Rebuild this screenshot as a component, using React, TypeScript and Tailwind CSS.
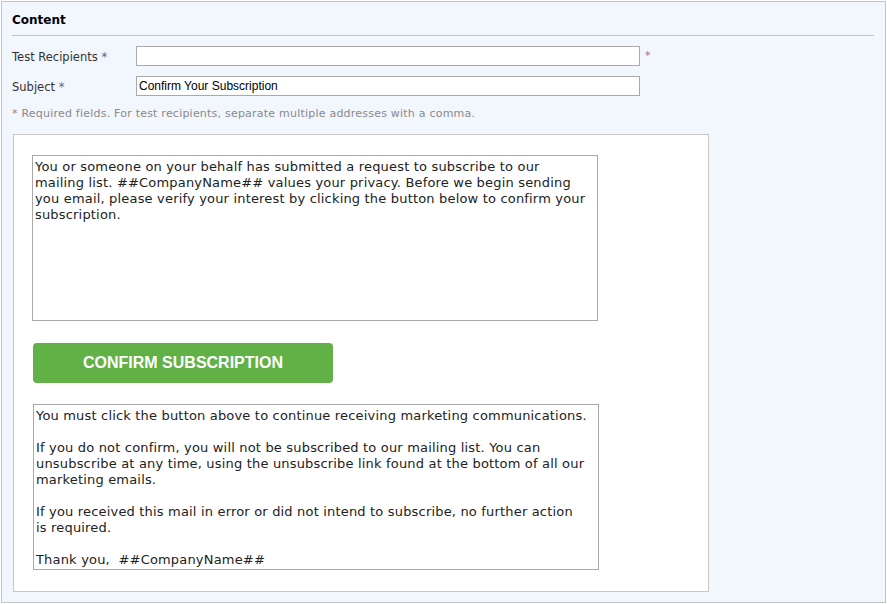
export default function App() {
  const body = "font-['DejaVu_Sans',Verdana,sans-serif]"
  return (
    <div className="pl-px pt-px bg-white">
      <div className={`w-[885px] h-[602px] border border-[#c4c4c4] bg-[#f2f6fd] text-[#222] ${body}`}>
        <div className="px-[10px] pt-[10px]">
          <div className="border-b border-[#c4c4c4] pb-[7px] mr-[1px] text-[12px] font-bold leading-[16px] text-black">Content</div>

          <div className="mt-[10px] flex items-center h-[20px]">
            <label className="w-[124px] pt-[3px] text-[11.5px] text-[#333]">
              Test Recipients <span className="text-[#666]">*</span>
            </label>
            <input className="w-[504px] h-[20px] border border-[#a9a9a9] bg-white" />
            <span className="ml-[5px] text-[11px] text-[#c0607a]">*</span>
          </div>

          <div className="mt-[10px] flex items-center h-[20px]">
            <label className="w-[124px] pt-[3px] text-[11.5px] text-[#333]">
              Subject <span className="text-[#666]">*</span>
            </label>
            <input
              defaultValue="Confirm Your Subscription"
              className="w-[504px] h-[20px] border border-[#a9a9a9] bg-white px-[2px] text-[12px] text-black font-['Liberation_Sans',Arial,sans-serif]"
            />
          </div>

          <p className="mt-[10px] text-[11px] leading-[16px] tracking-[0.22px] text-[#8a8a8a]">
            * Required fields. For test recipients, separate multiple addresses with a comma.
          </p>

          <div className="mt-[12px] ml-[1px] w-[696px] h-[458px] border border-[#c8c8c8] bg-white pl-[18px] pt-[20px]">
            <div className="w-[566px] h-[166px] border border-[#a9a9a9] pl-[2px] pr-[10px] pt-[3px] text-[13px] leading-[16px] tracking-[0.18px] text-[#222]">
              You or someone on your behalf has submitted a request to subscribe to our mailing list. ##CompanyName## values your privacy. Before we begin sending you email, please verify your interest by clicking the button below to confirm your subscription.
            </div>

            <button className="mt-[22px] ml-[1px] w-[300px] h-[40px] rounded-[4px] bg-[#62b146] text-white text-[16px] font-bold font-['Liberation_Sans',Arial,sans-serif]">
              CONFIRM SUBSCRIPTION
            </button>

            <div className="mt-[21px] ml-[1px] w-[566px] h-[166px] border border-[#a9a9a9] pl-[2px] pr-[10px] pt-[3px] text-[13px] leading-[16px] tracking-[0.18px] text-[#222]">
              <p>You must click the button above to continue receiving marketing communications.</p>
              <p className="mt-[16px]">
                If you do not confirm, you will not be subscribed to our mailing list. You can unsubscribe at any time, using the unsubscribe link found at the bottom of all our marketing emails.
              </p>
              <p className="mt-[16px]">
                If you received this mail in error or did not intend to subscribe, no further action
                <br />
                is required.
              </p>
              <p className="mt-[16px] whitespace-pre">Thank you,  ##CompanyName##</p>
            </div>
          </div>
        </div>
      </div>
    </div>
  )
}
